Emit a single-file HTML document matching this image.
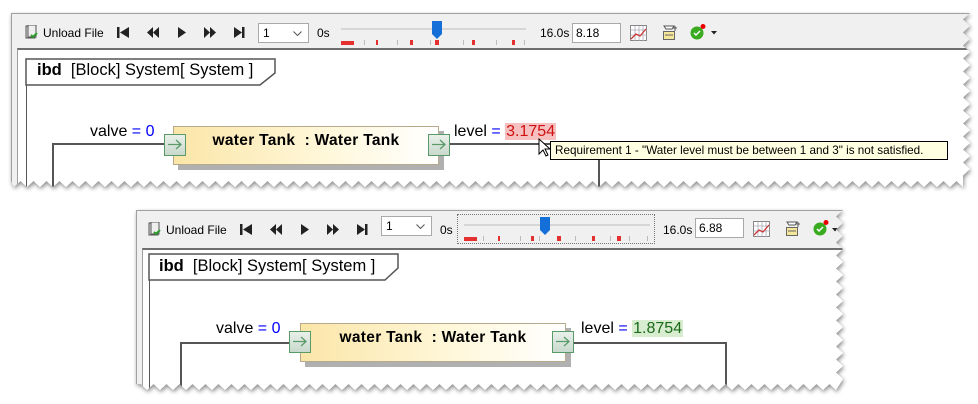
<!DOCTYPE html>
<html><head><meta charset="utf-8"><style>
body{margin:0;width:978px;height:404px;background:#fff;position:relative;overflow:hidden;font-family:"Liberation Sans",Arial,sans-serif}
.wrap{position:absolute;filter:drop-shadow(1px 2px 2px rgba(0,0,0,.45))}
.panel{position:absolute;left:0;top:0;background:#f0f0f0;border-top:1px solid #a0a0a0;border-left:1px solid #a0a0a0;box-sizing:border-box;overflow:hidden}
.a{position:absolute;white-space:nowrap}
.tb{font-size:12px;color:#000}
.content{position:absolute;left:5px;top:34px;right:0;bottom:0;background:#fff;border-top:2px solid #6e6e6e;border-left:1px solid #a0a0a0;overflow:hidden}
.combo{position:absolute;width:51px;height:20px;border:1px solid #a9a9a9;background:#fff;box-sizing:border-box;font-size:12px;padding:2px 4px}
.inp{position:absolute;width:49px;height:20px;border:1px solid #a9a9a9;background:#fff;box-sizing:border-box;font-size:12px;padding:2px 3px}
.frame{position:absolute;width:2000px;height:400px;border-left:1.5px solid #555}
.lbl{font-size:16px;color:#000}
.hd{font-size:16.5px;color:#000}
.blk{position:absolute;width:266px;height:39px;border:1px solid #b7a98b;background:linear-gradient(90deg,#fbe6a8,#fff8dc 60%,#fff);box-shadow:5px 5px 0 #b0b0b0;box-sizing:border-box;text-align:center;font-weight:bold;font-size:15.5px;line-height:27px;letter-spacing:.3px}
.port{position:absolute;width:22px;height:22px;border:1.5px solid #5a9a68;background:linear-gradient(#e8f0ea,#c9d9cd);box-sizing:border-box}
.line{position:absolute;background:#555}
.chev{position:absolute;right:6px;top:7px}
</style></head><body>

<!-- Panel 1 -->
<div class="wrap" style="left:11px;top:13px;width:959px;height:174px">
<div class="panel" id="p1" style="width:959px;height:174px">
  <svg class="a" style="left:13px;top:11px" width="14" height="15" viewBox="0 0 14 15"><rect x="1" y="1" width="9" height="12" fill="#ddd" stroke="#555"/><rect x="3" y="0" width="8" height="12" fill="#eee" stroke="#555"/><path d="M6 10l2 2 4-4" stroke="#2a9a2a" stroke-width="2" fill="none"/></svg>
  <div class="a tb" style="left:31px;top:12px">Unload File</div>
  <svg class="a" style="left:104px;top:12px" width="140" height="14" viewBox="0 0 140 14">
    <rect x="1" y="1" width="2.5" height="11" fill="#222"/><path d="M13 1v11L4 6.5z" fill="#222"/>
    <path d="M37 1v11l-6-5.5zM43 1v11l-6-5.5z" fill="#222"/>
    <path d="M62 1v11l8-5.5z" fill="#222"/>
    <path d="M88 1v11l6-5.5zM94 1v11l6-5.5z" fill="#222"/>
    <path d="M118 1v11l8-5.5z" fill="#222"/><rect x="126" y="1" width="2.5" height="11" fill="#222"/>
  </svg>
  <div class="combo" style="left:246px;top:9px">1<svg class="chev" width="9" height="5"><path d="M.5.5l4 4 4-4" stroke="#555" fill="none"/></svg></div>
  <div class="a tb" style="left:305px;top:12px">0s</div>
  <div class="a" style="left:329px;top:14px;width:185px;height:2px;background:#d6d6d6"></div>
  <div class="a" style="left:329px;top:27px;width:13px;height:4px;background:#e53030"></div>
  <svg class="a" style="left:329px;top:24px" width="190" height="8"><g fill="#e53030"><rect x="35" y="2" width="2" height="5"/><rect x="69" y="2" width="3" height="5"/><rect x="94" y="2" width="4" height="5"/><rect x="131" y="2" width="3" height="5"/><rect x="171" y="2" width="3" height="5"/></g><g fill="#bbb"><rect x="23" y="2" width="1" height="5"/><rect x="56" y="2" width="1" height="5"/><rect x="89" y="2" width="1" height="5"/><rect x="122" y="2" width="1" height="5"/><rect x="155" y="2" width="1" height="5"/><rect x="183" y="2" width="1" height="5"/></g></svg>
  <svg class="a" style="left:419px;top:6px" width="12" height="19"><path d="M1 1h10v13l-5 5-5-5z" fill="#1470d8"/></svg>
  <div class="a tb" style="left:528px;top:12px">16.0s</div>
  <div class="inp" style="left:560px;top:9px">8.18</div>
  <svg class="a" style="left:618px;top:11px" width="17" height="16"><rect x=".5" y=".5" width="16" height="15" fill="#fff" stroke="#888"/><path d="M1 5h16M1 10h16M5 1v15M9 1v15M13 1v15" stroke="#aab" stroke-width=".8"/><path d="M1 14l5-5 4 2 6-7" stroke="#c33" stroke-width="1.3" fill="none"/></svg>
  <svg class="a" style="left:649px;top:10px" width="17" height="17"><path d="M3 2h10l-2 3H5z" fill="#fff" stroke="#555"/><rect x="2.5" y="7.5" width="11" height="8" fill="#f4e79a" stroke="#666"/><path d="M4 11h8" stroke="#666"/><path d="M14 2v5M12 4h4" stroke="#555"/></svg>
  <svg class="a" style="left:677px;top:9px" width="20" height="18"><circle cx="8" cy="10" r="6.5" fill="#3aaa20"/><path d="M5 10l2 2 4-4" stroke="#fff" stroke-width="1.5" fill="none"/><circle cx="14" cy="3.5" r="2.5" fill="#e00"/></svg>
  <svg class="a" style="left:699px;top:17px" width="7" height="4"><path d="M0 0h6l-3 3.5z" fill="#222"/></svg>
  <div class="content">
    <div class="frame" style="left:8px;top:9px"></div>
    <svg class="a" style="left:7px;top:8px" width="252" height="30"><path d="M1 1V27H235L250 15V1Z" fill="#fff" stroke="#555" stroke-width="1.5"/></svg>
    <div class="a hd" style="left:19px;top:11px"><b>ibd</b> &nbsp;[Block] System[ System ]</div>
    <div class="a lbl" style="left:72px;top:73px">valve <span style="color:#00f">= 0</span></div>
    <div class="line" style="left:34px;top:93px;width:112px;height:1.5px"></div>
    <div class="line" style="left:34px;top:93px;width:1.5px;height:60px"></div>
    <div class="blk" style="left:155px;top:76px">water Tank &nbsp;: Water Tank</div>
    <div class="port" style="left:146px;top:84px"><svg width="20" height="20" style="position:absolute;left:0;top:0"><path d="M3 9.5h13M11 5l5 4.5-5 4.5" stroke="#5a9a68" stroke-width="1.3" fill="none"/></svg></div>
    <div class="port" style="left:410px;top:84px"><svg width="20" height="20" style="position:absolute;left:0;top:0"><path d="M3 9.5h13M11 5l5 4.5-5 4.5" stroke="#5a9a68" stroke-width="1.3" fill="none"/></svg></div>
    <div class="a lbl" style="left:436px;top:73px">level <span style="color:#00f">=</span> <span style="background:#f6c0c0;color:#d01010;padding:0 1px">3.1754</span></div>
    <div class="line" style="left:432px;top:93px;width:150px;height:1.5px"></div>
    <div class="line" style="left:580px;top:93px;width:1.5px;height:60px"></div>
    <svg class="a" style="left:520px;top:88px" width="14" height="20"><path d="M1 1v15l4-4 3 6 2-1-3-6h5z" fill="#fff" stroke="#000"/></svg>
    <div class="a" style="left:532px;top:91px;width:398px;height:19px;background:#ffffe1;border:1px solid #000;font-size:11.7px;line-height:18px;padding-left:4px;box-sizing:border-box">Requirement 1 - "Water level must be between 1 and 3" is not satisfied.</div>
  </div>
</div></div>

<!-- Panel 2 -->
<div class="wrap" style="left:136px;top:210px;width:707px;height:180px">
<div class="panel" id="p2" style="width:707px;height:180px">
  <svg class="a" style="left:11px;top:11px" width="14" height="15" viewBox="0 0 14 15"><rect x="1" y="1" width="9" height="12" fill="#ddd" stroke="#555"/><rect x="3" y="0" width="8" height="12" fill="#eee" stroke="#555"/><path d="M6 10l2 2 4-4" stroke="#2a9a2a" stroke-width="2" fill="none"/></svg>
  <div class="a tb" style="left:29px;top:12px">Unload File</div>
  <svg class="a" style="left:102px;top:12px" width="140" height="14" viewBox="0 0 140 14">
    <rect x="1" y="1" width="2.5" height="11" fill="#222"/><path d="M13 1v11L4 6.5z" fill="#222"/>
    <path d="M37 1v11l-6-5.5zM43 1v11l-6-5.5z" fill="#222"/>
    <path d="M62 1v11l8-5.5z" fill="#222"/>
    <path d="M88 1v11l6-5.5zM94 1v11l6-5.5z" fill="#222"/>
    <path d="M118 1v11l8-5.5z" fill="#222"/><rect x="126" y="1" width="2.5" height="11" fill="#222"/>
  </svg>
  <div class="combo" style="left:244px;top:5px">1<svg class="chev" width="9" height="5"><path d="M.5.5l4 4 4-4" stroke="#555" fill="none"/></svg></div>
  <div class="a tb" style="left:303px;top:12px">0s</div>
  <div class="a" style="left:320px;top:3px;width:198px;height:30px;border:1px dotted #777;box-sizing:border-box"></div>
  <div class="a" style="left:327px;top:13px;width:186px;height:2px;background:#d6d6d6"></div>
  <div class="a" style="left:327px;top:26px;width:13px;height:4px;background:#e53030"></div>
  <svg class="a" style="left:327px;top:23px" width="190" height="8"><g fill="#e53030"><rect x="34" y="2" width="2" height="5"/><rect x="67" y="2" width="3" height="5"/><rect x="93" y="2" width="4" height="5"/><rect x="128" y="2" width="3" height="5"/><rect x="153" y="2" width="4" height="5"/></g><g fill="#bbb"><rect x="19" y="2" width="1" height="5"/><rect x="56" y="2" width="1" height="5"/><rect x="75" y="2" width="1" height="5"/><rect x="111" y="2" width="1" height="5"/><rect x="146" y="2" width="1" height="5"/><rect x="165" y="2" width="1" height="5"/><rect x="183" y="2" width="1" height="5"/></g></svg>
  <svg class="a" style="left:402px;top:5px" width="12" height="19"><path d="M1 1h10v13l-5 5-5-5z" fill="#1470d8"/></svg>
  <div class="a tb" style="left:526px;top:12px">16.0s</div>
  <div class="inp" style="left:558px;top:7px">6.88</div>
  <svg class="a" style="left:616px;top:10px" width="17" height="16"><rect x=".5" y=".5" width="16" height="15" fill="#fff" stroke="#888"/><path d="M1 5h16M1 10h16M5 1v15M9 1v15M13 1v15" stroke="#aab" stroke-width=".8"/><path d="M1 14l5-5 4 2 6-7" stroke="#c33" stroke-width="1.3" fill="none"/></svg>
  <svg class="a" style="left:647px;top:9px" width="17" height="17"><path d="M3 2h10l-2 3H5z" fill="#fff" stroke="#555"/><rect x="2.5" y="7.5" width="11" height="8" fill="#f4e79a" stroke="#666"/><path d="M4 11h8" stroke="#666"/><path d="M14 2v5M12 4h4" stroke="#555"/></svg>
  <svg class="a" style="left:675px;top:8px" width="20" height="18"><circle cx="8" cy="10" r="6.5" fill="#3aaa20"/><path d="M5 10l2 2 4-4" stroke="#fff" stroke-width="1.5" fill="none"/><circle cx="14" cy="3.5" r="2.5" fill="#e00"/></svg>
  <svg class="a" style="left:695px;top:17px" width="7" height="4"><path d="M0 0h6l-3 3.5z" fill="#222"/></svg>
  <div class="content" style="top:37px">
    <div class="frame" style="left:6px;top:4px"></div>
    <svg class="a" style="left:-1px;top:3px" width="260" height="30"><path d="M7 1V27H243L256 15V1Z" fill="#fff" stroke="#555" stroke-width="1.5"/></svg>
    <div class="a hd" style="left:16px;top:7px"><b>ibd</b> &nbsp;[Block] System[ System ]</div>
    <div class="a lbl" style="left:73px;top:70px">valve <span style="color:#00f">= 0</span></div>
    <div class="line" style="left:37px;top:92px;width:112px;height:1.5px"></div>
    <div class="line" style="left:37px;top:92px;width:1.5px;height:60px"></div>
    <div class="blk" style="left:157px;top:73px">water Tank &nbsp;: Water Tank</div>
    <div class="port" style="left:146px;top:81px"><svg width="20" height="20" style="position:absolute;left:0;top:0"><path d="M3 9.5h13M11 5l5 4.5-5 4.5" stroke="#5a9a68" stroke-width="1.3" fill="none"/></svg></div>
    <div class="port" style="left:409px;top:81px"><svg width="20" height="20" style="position:absolute;left:0;top:0"><path d="M3 9.5h13M11 5l5 4.5-5 4.5" stroke="#5a9a68" stroke-width="1.3" fill="none"/></svg></div>
    <div class="a lbl" style="left:438px;top:70px">level <span style="color:#00f">=</span> <span style="background:#d8ecd0;color:#1a6a1a;padding:0 1px">1.8754</span></div>
    <div class="line" style="left:431px;top:92px;width:152px;height:1.5px"></div>
    <div class="line" style="left:582px;top:92px;width:1.5px;height:60px"></div>
  </div>
</div></div>

<script>
function zig(el,W,H){var p=['0px 0px'],a=7,s=6.5,y,x,i=0;
for(y=0;y<=H-6;y+=s){p.push((i%2?W-a:W)+'px '+y+'px');i++;}
i=0;for(x=W-a;x>=0;x-=s){p.push(x+'px '+(i%2?H-6:H)+'px');i++;}
p.push('0px '+(H-6)+'px');el.style.clipPath='polygon('+p.join(',')+')';}
zig(document.getElementById('p1'),959,174);
zig(document.getElementById('p2'),707,180);
</script>
</body></html>
